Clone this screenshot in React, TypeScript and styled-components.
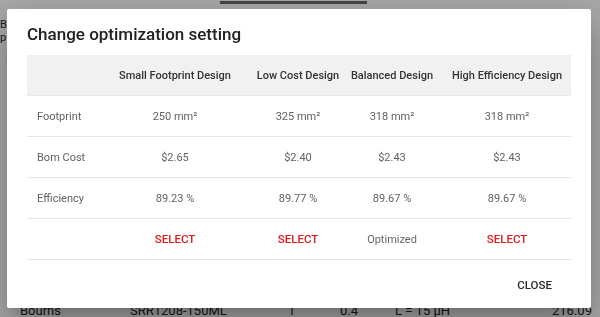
import styled, { createGlobalStyle } from "styled-components";

const GlobalStyle = createGlobalStyle`
  html, body {
    margin: 0;
    padding: 0;
    width: 600px;
    height: 317px;
    overflow: hidden;
    font-family: Roboto, "Liberation Sans", sans-serif;
    background: #ffffff;
  }
`;

const designs = [
  { name: "Small Footprint Design", footprint: "250 mm²", cost: "$2.65", eff: "89.23 %", optimized: false },
  { name: "Low Cost Design", footprint: "325 mm²", cost: "$2.40", eff: "89.77 %", optimized: false },
  { name: "Balanced Design", footprint: "318 mm²", cost: "$2.43", eff: "89.67 %", optimized: true },
  { name: "High Efficiency Design", footprint: "318 mm²", cost: "$2.43", eff: "89.67 %", optimized: false },
];

const App = () => {
  return (
    <>
      <GlobalStyle />
      <Page>
        <TabBar>
          <TabIndicator />
        </TabBar>
        <SideText>B</SideText>
        <SideText>p</SideText>
        <Filler />
        <BomRow>
          <BomCell w={130} pl={20}>Bourns</BomCell>
          <BomCell w={158} pl={0}>SRR1208-150ML</BomCell>
          <BomCell w={52} pl={0}>1</BomCell>
          <BomCell w={55} pl={0}>0.4</BomCell>
          <BomCell w={157} pl={0}>L = 15 µH</BomCell>
          <BomCell w={48} pl={0}>216.09</BomCell>
        </BomRow>
      </Page>
      <Backdrop />
      <Dialog>
        <Title>Change optimization setting</Title>
        <Table>
          <HeadRow>
            <Cell />
            {designs.map((d) => (
              <HeadCell key={d.name}>{d.name}</HeadCell>
            ))}
          </HeadRow>
          <Row>
            <LabelCell>Footprint</LabelCell>
            {designs.map((d) => (
              <Cell key={d.name}>{d.footprint}</Cell>
            ))}
          </Row>
          <Row>
            <LabelCell>Bom Cost</LabelCell>
            {designs.map((d) => (
              <Cell key={d.name}>{d.cost}</Cell>
            ))}
          </Row>
          <Row>
            <LabelCell>Efficiency</LabelCell>
            {designs.map((d) => (
              <Cell key={d.name}>{d.eff}</Cell>
            ))}
          </Row>
          <Row>
            <LabelCell />
            {designs.map((d) => (
              <Cell key={d.name}>
                {d.optimized ? <Optimized>Optimized</Optimized> : <SelectButton>SELECT</SelectButton>}
              </Cell>
            ))}
          </Row>
        </Table>
        <Actions>
          <CloseButton>CLOSE</CloseButton>
        </Actions>
      </Dialog>
    </>
  );
};

export default App;

const Page = styled.div`
  width: 600px;
  height: 317px;
  display: flex;
  flex-direction: column;
  color: #333;
  font-size: 12px;
`;

const TabBar = styled.div`
  height: 18px;
  padding-top: 1px;
  box-sizing: border-box;
`;

const TabIndicator = styled.div`
  margin-left: 220px;
  width: 147px;
  height: 3px;
  background: #6a6a6a;
`;

const SideText = styled.div`
  height: 13px;
  line-height: 13px;
  font-size: 11px;
  color: #222;
`;

const Filler = styled.div`
  flex: 1;
`;

const BomRow = styled.div`
  display: flex;
  height: 15px;
  line-height: 18px;
  font-size: 13px;
  color: #222;
`;

const BomCell = styled.div<{ w: number; pl: number }>`
  box-sizing: border-box;
  width: ${(p) => p.w}px;
  padding-left: ${(p) => p.pl}px;
  white-space: nowrap;
`;

const Backdrop = styled.div`
  position: fixed;
  inset: 0;
  background: rgba(0, 0, 0, 0.34);
`;

const Dialog = styled.div`
  position: fixed;
  left: 7px;
  top: 9px;
  width: 584px;
  height: 299px;
  background: #fff;
  border-radius: 2px;
  box-shadow: 0 11px 15px -7px rgba(0, 0, 0, 0.2), 0 24px 38px 3px rgba(0, 0, 0, 0.14),
    0 9px 46px 8px rgba(0, 0, 0, 0.12);
  display: flex;
  flex-direction: column;
`;

const Title = styled.div`
  padding: 13px 20px 0;
  font-size: 17px;
  line-height: 24px;
  font-weight: 500;
  color: #212121;
`;

const Table = styled.div`
  margin: 9px 20px 0;
  display: flex;
  flex-direction: column;
`;

const Row = styled.div`
  display: grid;
  grid-template-columns: 68px 160px 86px 102px 128px;
  height: 41px;
  border-bottom: 1px solid #e6e6e6;
  box-sizing: border-box;
`;

const HeadRow = styled(Row)`
  background: #f1f1f1;
  border-bottom: 1px solid #e9e9e9;
`;

const Cell = styled.div`
  display: flex;
  align-items: center;
  justify-content: center;
  white-space: nowrap;
  font-size: 11px;
  color: #616161;
`;

const HeadCell = styled(Cell)`
  font-weight: 500;
  color: #333;
`;

const LabelCell = styled(Cell)`
  justify-content: flex-start;
  padding-left: 10px;
`;

const SelectButton = styled.span`
  color: #df1b1b;
  font-weight: 500;
  font-size: 11.5px;
  cursor: pointer;
`;

const Optimized = styled.span`
  color: #666;
`;

const Actions = styled.div`
  flex: 1;
  display: flex;
  align-items: center;
  justify-content: flex-end;
  padding: 2px 39px 0 0;
`;

const CloseButton = styled.span`
  font-size: 11.5px;
  font-weight: 500;
  color: #2a2a2a;
  cursor: pointer;
`;
